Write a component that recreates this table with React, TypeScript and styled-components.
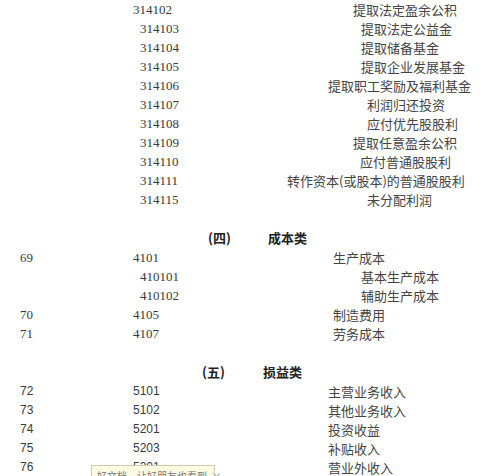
import React from "react";
import styled, { createGlobalStyle } from "styled-components";

const Global = createGlobalStyle`
  html, body { margin: 0; padding: 0; background: #fff; overflow: hidden; }
  body { font-family: "Liberation Serif", "Noto Sans CJK SC", serif; }
`;

const Page = styled.div`
  position: relative;
  width: 499px;
  height: 476px;
  overflow: hidden;
  color: #333;
`;

const Section = styled.section`
  display: flex;
  flex-direction: column;
`;

const Row = styled.div`
  display: grid;
  grid-template-columns: 133px 100px 1fr;
  height: 19px;
  line-height: 19px;
  white-space: nowrap;
`;

const Num = styled.span<{ $sans?: boolean }>`
  padding-left: 20px;
  font-family: ${(p) =>
    p.$sans ? '"Liberation Sans", Arial, sans-serif' : '"Liberation Serif", serif'};
  font-size: ${(p) => (p.$sans ? "12px" : "13px")};
  color: #3a3a3a;
`;

const Code = styled.span<{ $indent?: number; $sans?: boolean }>`
  padding-left: ${(p) => p.$indent ?? 0}px;
  font-family: ${(p) =>
    p.$sans ? '"Liberation Sans", Arial, sans-serif' : '"Liberation Serif", serif'};
  font-size: ${(p) => (p.$sans ? "12px" : "13px")};
  color: #3a3a3a;
`;

const Name = styled.span<{ $x: number }>`
  padding-left: ${(p) => p.$x - 233}px;
  font-family: "Noto Sans CJK SC", "Noto Sans", sans-serif;
  font-size: 13px;
  color: #444;
`;

const Heading = styled.div<{ $label: number; $title: number }>`
  display: grid;
  grid-template-columns: ${(p) => p.$title}px 1fr;
  margin-top: 19px;
  height: 20px;
  line-height: 20px;
  font-family: "Noto Sans CJK SC", "Noto Sans", sans-serif;
  font-weight: 700;
  font-size: 13px;
  color: #222;
  white-space: nowrap;
  & > span:first-child {
    padding-left: ${(p) => p.$label}px;
  }
`;

const Toast = styled.div`
  position: absolute;
  left: 91px;
  top: 465px;
  width: 124px;
  height: 22px;
  box-sizing: border-box;
  padding: 3px 0 0 5px;
  background: #fffbe3;
  border: 1px solid #cfcab0;
  font-family: "Noto Sans CJK SC", sans-serif;
  font-size: 10px;
  line-height: 14px;
  color: #777;
  white-space: nowrap;
  display: flex;
  gap: 4px;
`;

const Close = styled.span`
  color: #999;
  font-size: 11px;
`;

type R = { n?: string; c: string; ci?: number; name: string; x: number };

const top: R[] = [
  { c: "314102", name: "提取法定盈余公积", x: 353 },
  { c: "314103", ci: 7, name: "提取法定公益金", x: 361 },
  { c: "314104", ci: 7, name: "提取储备基金", x: 361 },
  { c: "314105", ci: 7, name: "提取企业发展基金", x: 361 },
  { c: "314106", ci: 7, name: "提取职工奖励及福利基金", x: 328 },
  { c: "314107", ci: 7, name: "利润归还投资", x: 367 },
  { c: "314108", ci: 7, name: "应付优先股股利", x: 367 },
  { c: "314109", ci: 7, name: "提取任意盈余公积", x: 353 },
  { c: "314110", ci: 7, name: "应付普通股股利", x: 360 },
  { c: "314111", ci: 7, name: "转作资本(或股本)的普通股股利", x: 287 },
  { c: "314115", ci: 7, name: "未分配利润", x: 367 },
];

const cost: R[] = [
  { n: "69", c: "4101", name: "生产成本", x: 333 },
  { c: "410101", ci: 7, name: "基本生产成本", x: 361 },
  { c: "410102", ci: 7, name: "辅助生产成本", x: 361 },
  { n: "70", c: "4105", name: "制造费用", x: 333 },
  { n: "71", c: "4107", name: "劳务成本", x: 333 },
];

const pl: R[] = [
  { n: "72", c: "5101", name: "主营业务收入", x: 328 },
  { n: "73", c: "5102", name: "其他业务收入", x: 328 },
  { n: "74", c: "5201", name: "投资收益", x: 328 },
  { n: "75", c: "5203", name: "补贴收入", x: 328 },
  { n: "76", c: "5301", name: "营业外收入", x: 328 },
];

const Rows = ({ rows, sans }: { rows: R[]; sans?: boolean }) => (
  <>
    {rows.map((r) => (
      <Row key={r.c}>
        <Num $sans={sans}>{r.n ?? ""}</Num>
        <Code $indent={r.ci} $sans={sans}>
          {r.c}
        </Code>
        <Name $x={r.x}>{r.name}</Name>
      </Row>
    ))}
  </>
);

export default function App() {
  return (
    <Page>
      <Global />
      <Section>
        <Rows rows={top} />
      </Section>
      <Section>
        <Heading $label={208} $title={268}>
          <span>(四)</span>
          <span>成本类</span>
        </Heading>
        <Rows rows={cost} />
      </Section>
      <Section>
        <Heading $label={202} $title={263}>
          <span>(五)</span>
          <span>损益类</span>
        </Heading>
        <Rows rows={pl} sans />
      </Section>
      <Toast>
        <span>好文档，让好朋友也看到</span>
        <Close>×</Close>
      </Toast>
    </Page>
  );
}
